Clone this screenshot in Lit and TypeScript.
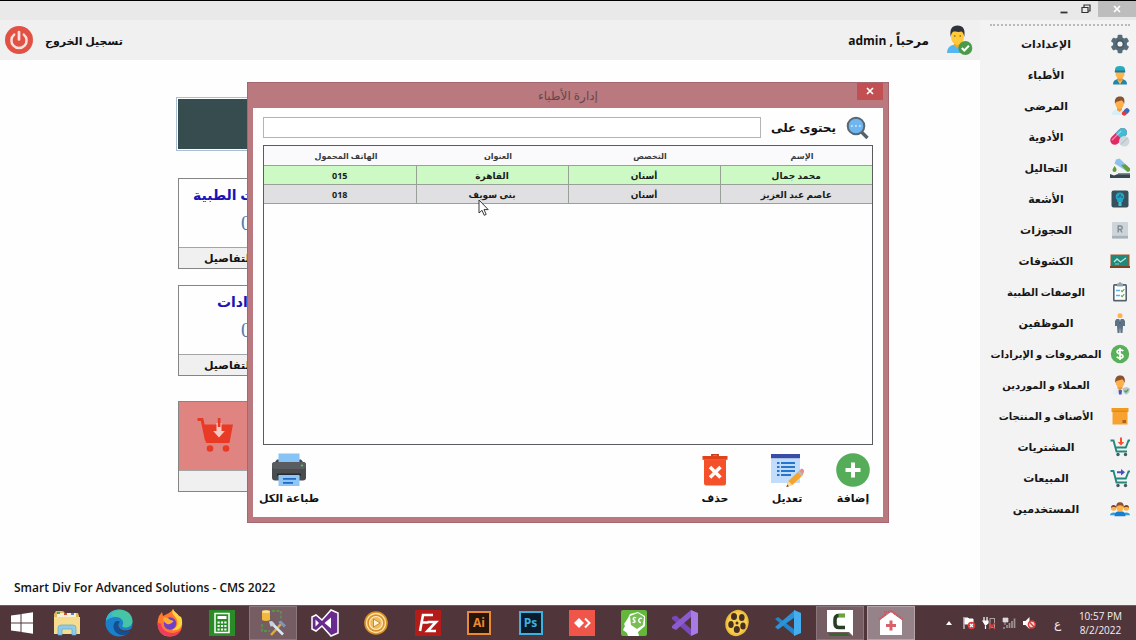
import { LitElement, html, css, TemplateResult } from "lit";
import { customElement, state } from "lit/decorators.js";
import { classMap } from "lit/directives/class-map.js";

type Icon = TemplateResult;

/* ---------- side menu icons ---------- */
const gear = html`<svg viewBox="0 0 20 20"><g fill="#566b78"><circle cx="10" cy="10" r="7"/><rect x="7.6" y="0.8" width="4.8" height="18.4" rx="1"/><rect x="7.6" y="0.8" width="4.8" height="18.4" rx="1" transform="rotate(60 10 10)"/><rect x="7.6" y="0.8" width="4.8" height="18.4" rx="1" transform="rotate(120 10 10)"/></g><circle cx="10" cy="10" r="4.4" fill="#455a64"/><circle cx="10" cy="10" r="2.6" fill="#f3f3f3"/></svg>`;
const surgeon = html`<svg viewBox="0 0 20 20"><path d="M3 19.5c0-4 2.5-5.5 7-5.5s7 1.500 7 5.500z" fill="#1e88a8"/><path d="M7.500 12h5v3L10 17.500 7.500 15z" fill="#e59a3c"/><path d="M10 19.500l-3-5 3 2 3-2z" fill="#ffb74d"/><ellipse cx="10" cy="8.800" rx="4.500" ry="5" fill="#ffb44c"/><path d="M5 6.500V4.500C5 2 7 1 10 1s5 1 5 3.500v2z" fill="#28a9c0"/><path d="M4.800 5.500h10.400v2H4.800z" fill="#177d97"/></svg>`;
const patient = html`<svg viewBox="0 0 20 20"><path d="M2 19c0-4 2.500-6 7-6 3 0 5 1 6 3v3z" fill="#d8eef6"/><path d="M7 11h5v3l-2.500 2L7 14z" fill="#ee9b3f"/><ellipse cx="9.600" cy="7.500" rx="4.300" ry="5.200" fill="#ffb04c"/><path d="M5 8C4.300 3 6 .500 10 .500S15 3 14.200 8c-.700-2-1.200-3-2.700-3.800C9 5.500 6 5 5 8z" fill="#8a5230"/><g transform="rotate(-45 15.500 16)"><rect x="11.300" y="13.800" width="8.400" height="4.600" rx="2.300" fill="#e53a35"/><path d="M15.500 13.800h2a2.300 2.300 0 0 1 0 4.600h-2z" fill="#2a6fc9"/></g></svg>`;
const pills = html`<svg viewBox="0 0 20 20"><g transform="rotate(-45 9 9)"><rect x="-1.500" y="4.500" width="20" height="9" rx="4.500" fill="#e02a63"/><path d="M8.500 4.500h5.500a4.500 4.500 0 0 1 0 9h-5.500z" fill="#42bcd4"/><path d="M1.500 7h12" stroke="#fff" stroke-opacity=".5" stroke-width="1.300" stroke-linecap="round"/></g><circle cx="14.300" cy="14.300" r="5.200" fill="#cfd8dc"/><path d="M11 17.500l6.500-6.500" stroke="#aab8c0"/></svg>`;
const lab = html`<svg viewBox="0 0 20 20"><path d="M6 1.500l3.500-1L20 10.500c1 2-1 4-3 3L4.500 5.500z" fill="#8fc0ee"/><path d="M11 7l4.500-.700 4.500 4.200c1 2-1 4-3 3z" fill="#62a03f"/><path d="M4.500 8c2 2.500 2.200 3 2 4a2 2 0 0 1-4 0c0-1 1-2 2-4z" fill="#5c9d37"/><path d="M0 16l4 1.500 4-1.500h12v4H0z" fill="#37474f"/><path d="M8 15h12v1.500H8z" fill="#78909c"/></svg>`;
const xray = html`<svg viewBox="0 0 20 20"><rect x="1.500" y="1.500" width="17" height="17" rx="2" fill="#37505d"/><path d="M10 3.500c3 0 4.300 1.700 4.300 4 0 2-.8 2.500-1.500 3.500v2H7.200v-2c-.700-1-1.500-1.500-1.500-3.500 0-2.300 1.300-4 4.300-4z" fill="#20a7c6"/><path d="M10 5v3M7.500 8h2M11 8h2M7 14h6" stroke="#164c66" stroke-width=".900"/><path d="M8.500 13h3v4h-3z" fill="#44c5dc"/></svg>`;
const keyR = html`<svg viewBox="0 0 20 20"><rect x="2" y="2" width="16" height="16.500" rx="1" fill="#cdd5da"/><path d="M2 15.800h16v2.700H2z" fill="#a8b2ba"/><path d="M8.200 12.500V6H10.500a1.700 1.700 0 0 1 0 3.500H8.200M10.300 9.500l1.700 3" fill="none" stroke="#7f8a92" stroke-width="1.400"/></svg>`;
const board = html`<svg viewBox="0 0 20 20"><rect x=".500" y="3.500" width="19" height="13" fill="#a2562c"/><rect x="1.800" y="4.800" width="16.400" height="9.900" fill="#21897a"/><path d="M4 11l3-3 3.500 3L16 7" fill="none" stroke="#bfe9df" stroke-width="1.300"/><path d="M5 13h4" stroke="#8ed0c3"/><path d="M0 15h20v2H0z" fill="#7b4426"/></svg>`;
const clipboard = html`<svg viewBox="0 0 20 20"><rect x="3" y="2" width="14" height="17.500" rx="1.500" fill="#56626b"/><rect x="4.600" y="3.800" width="10.800" height="14" fill="#fff"/><path d="M7 1.500h1.500a1.500 1.500 0 0 1 3 0H13v3H7z" fill="#90a4ae"/><path d="M6 8.500h4M6 13.500h4" stroke="#59aee9" stroke-width="1.300"/><path d="M11 8.500l1.200 1.200L14.300 7M11 13.500l1.200 1.200 2.100-2.700" stroke="#4caf50" stroke-width="1.100" fill="none"/></svg>`;
const employee = html`<svg viewBox="0 0 20 20"><circle cx="10" cy="2.700" r="2.500" fill="#ffb34d"/><path d="M6.500 6h7l1.500 2v5h-2l-.500 7h-2l-.500-6-.500 6h-2L7 13H5V8z" fill="#5d7486"/><path d="M9 5.500h2L10 10z" fill="#fff"/><path d="M10 6.500v4" stroke="#2c3e50" stroke-width=".800"/></svg>`;
const dollar = html`<svg viewBox="0 0 20 20"><circle cx="10" cy="10" r="9.200" fill="#59b05a"/><path d="M13.200 7.200C12.500 5.700 7.300 5.200 7.100 7.700c0 2.700 5.900 1.800 5.900 4.600 0 2.600-5.300 2.300-6.200.300M10 4v12" fill="none" stroke="#fff" stroke-width="1.700"/></svg>`;
const client = html`<svg viewBox="0 0 20 20"><path d="M3 19.500c0-4 2-6.500 7-6.500s6 2.500 6 6.500z" fill="#e9edf5"/><path d="M10 14l-1.500 1.500L9 19.500h2.500l.500-4z" fill="#4958b0"/><path d="M7.500 10.500h5v3L10 15.500l-2.500-2z" fill="#ee9b3f"/><ellipse cx="10" cy="7.500" rx="4.300" ry="5" fill="#ffb04c"/><path d="M5.300 8C4.600 3 6.500.500 10.200.500S15.500 3 14.700 8c-.700-2-1.200-3-2.700-3.800-2.500 1.300-5.700.800-6.700 3.800z" fill="#8a5230"/><path d="M16.300 12l3.500 1.200c.200 3-1 5.200-3.500 6.500-2.500-1.300-3.700-3.500-3.500-6.500z" fill="#b8c5cb"/><path d="M14.500 15.500l1.500 1.500 2.300-2.600" stroke="#43a047" stroke-width="1.200" fill="none"/></svg>`;
const box = html`<svg viewBox="0 0 20 20"><path d="M1.500 2h17v4h-17z" fill="#f09a22"/><path d="M2.500 5h15v13.500h-15z" fill="#f7a22e"/><path d="M2.500 5.300h15" stroke="#d98412"/><path d="M12.500 14h3.500v3h-3.500z" fill="#9f672c"/></svg>`;
const cartIn = html`<svg viewBox="0 0 20 20"><path d="M.500 3.500h3L6.500 14.500h10.500M5.300 10.500h10.500l2.700-7h1.500" fill="none" stroke="#23897b" stroke-width="1.900"/><circle cx="8" cy="17.500" r="1.700" fill="#455a64"/><circle cx="15.500" cy="17.500" r="1.700" fill="#455a64"/><path d="M10 .500h2v4.500h2.200L11 8.500 7.800 5H10z" fill="#f4512c"/></svg>`;
const cartOut = html`<svg viewBox="0 0 20 20"><path d="M.500 3h3l3 11.500h10.500M5.300 10.500h10.500l2.700-7h1.500" fill="none" stroke="#23897b" stroke-width="1.900"/><circle cx="8" cy="17.500" r="1.700" fill="#455a64"/><circle cx="15.500" cy="17.500" r="1.700" fill="#455a64"/><path d="M7 3.300h4V1l4 3.300-4 3.300V5.300H7z" fill="#4a4fc0"/></svg>`;
const users = html`<svg viewBox="0 0 22 20"><path d="M0 17c0-4 7-4 8-1h6c1-3 8-3 8 1z" fill="#2f9fe0"/><circle cx="4" cy="9" r="3" fill="#ffb04c"/><path d="M1 9c0-4.500 6-4.500 6 0-1-1.500-5-1.500-6 0z" fill="#7a4526"/><circle cx="18" cy="9" r="3" fill="#ffb04c"/><path d="M15 9c0-4.500 6-4.500 6 0-1-1.500-5-1.500-6 0z" fill="#7a4526"/><path d="M5 18c0-4.500 2.500-5.500 6-5.500s6 1 6 5.500z" fill="#1480cf"/><ellipse cx="11" cy="8.500" rx="3.700" ry="4.500" fill="#ffb44c"/><path d="M7 8.500C6.500 4 8 2.500 11 2.500s4.500 1.500 4 6c-1.500-3.500-6.500-3.500-8 0z" fill="#8a5230"/></svg>`;

/* ---------- header and dialog icons ---------- */
const power = html`<svg class="i28" viewBox="0 0 28 28"><circle cx="14" cy="14" r="14" fill="#e25244"/><path d="M9.200 8.600a7.600 7.600 0 1 0 9.600 0" fill="none" stroke="#fbe0dc" stroke-width="2.500" stroke-linecap="round"/><path d="M14 6v7.500" stroke="#fbe0dc" stroke-width="2.700" stroke-linecap="round"/></svg>`;
const admin = html`<svg class="i30" viewBox="0 0 30 30"><path d="M2 28c0-6 4-8.500 10-8.500S22 22 22 28z" fill="#55b6ee"/><path d="M9 17h6.500v3.500L12.200 23 9 20.500z" fill="#f0a82a"/><ellipse cx="12.500" cy="11.500" rx="6.500" ry="8.500" fill="#ffc93a"/><path d="M5.700 12C4.500 4 7 .500 12.500 .500S20.500 4 19.300 12c-.500-3-1.300-4.500-2.800-5.500-3 1-6.500 0-8 0-1.500 1-2.300 2.500-2.800 5.500z" fill="#30343a"/><path d="M9 11h1.500M14.500 11H16" stroke="#5a3b1d"/><circle cx="20.300" cy="23" r="7" fill="#4a9a4a"/><path d="M16.800 23l2.500 2.500 4.600-4.800" fill="none" stroke="#fff" stroke-width="2"/></svg>`;
const search = html`<svg class="i24" viewBox="0 0 24 24"><path d="M15.500 16l6 6" stroke="#54626b" stroke-width="3.300"/><circle cx="10" cy="10" r="8.300" fill="#6fb5f2" stroke="#59686f" stroke-width="2"/><path d="M5 10h1.800M9 10h1.800M13 10h1.800" stroke="#d9ecfb" stroke-width="1.500"/></svg>`;
const add = html`<svg class="i34" viewBox="0 0 34 34"><circle cx="17" cy="17" r="16.800" fill="#55ac59"/><path d="M17 9.500v15M9.500 17h15" stroke="#fff" stroke-width="4"/></svg>`;
const edit = html`<svg class="i34" viewBox="0 0 34 34"><path d="M1 1h29v29H1z" fill="#c2dcfb"/><path d="M1 1h29v4.200H1z" fill="#3a4da4"/><path d="M7 10h2.500M7 14h2.500M7 18h2.500M7 22h2.500M11 10h14M11 14h14M11 18h14M11 22h10" stroke="#2775cf" stroke-width="1.900"/><path d="M16.500 34l1.800-6L29.500 17.500l4 4L22.300 32z" fill="#f4a62c"/><path d="M29 17.800l2-1.800c1.500-1 4 1.500 3 3l-1.500 3z" fill="#e88d91"/><path d="M27.800 19l3.900 4 1.300-1.200-3.900-4z" fill="#b8c0c6"/><path d="M16.500 34l1.800-6 4 4z" fill="#ffd7a0"/><path d="M16.500 34l.700-2.400 1.600 1.600z" fill="#37474f"/></svg>`;
const trash = html`<svg class="i34" viewBox="0 0 34 34"><path d="M14 3.500V1.800h6v1.700" fill="none" stroke="#c63d1a" stroke-width="1.800"/><path d="M4.500 3h25v3.800h-25z" fill="#e0431c"/><path d="M6 6.500h22V30a2.500 2.500 0 0 1-2.500 2.500h-17A2.500 2.500 0 0 1 6 30z" fill="#f4512a"/><path d="M12 14l10.500 10.500M22.500 14L12 24.500" stroke="#fff" stroke-width="3.500"/></svg>`;
const printer = html`<svg class="i34" viewBox="0 0 34 34"><path d="M3 9l2-2.500h24L31 9z" fill="#37444b"/><path d="M6.500.500h21V10h-21z" fill="#88c3f6"/><rect x="0" y="9" width="34" height="18.500" rx="3" fill="#4a4d50"/><rect x="0" y="9" width="34" height="7" rx="3" fill="#5a5d60"/><circle cx="30" cy="12.500" r="1" fill="#55d66b"/><path d="M5 20.500h24V23H5z" fill="#292c2f"/><path d="M6.500 22h21v11h-21z" fill="#8fc6f8"/><path d="M11 25.800h13M11 29.800h10" stroke="#2468c0" stroke-width="1.700"/></svg>`;
const bigCart = html`<svg class="i36" viewBox="0 0 36 36"><path d="M.500 2.500h4.500l4.500 21" fill="none" stroke="#e93a25" stroke-width="3"/><path d="M5.500 7.500H36L32.500 26H9z" fill="#e93a25"/><path d="M19.500 6h5v8h3.300L22 20.500 16.200 14h3.300z" fill="#f3c9c4"/><path d="M20.800 1h2.700v9h-2.700z" fill="#e93a25"/><circle cx="13" cy="31.500" r="3.300" fill="#e93a25"/><circle cx="29" cy="31.500" r="3.300" fill="#e93a25"/></svg>`;
const arrow = html`<svg class="cursor" viewBox="0 0 12 18" aria-hidden="true"><path d="M1 1v13l3-2.700 2.200 5 2-.900L6 10.600h4.200z" fill="#fff" stroke="#222" stroke-width=".900"/></svg>`;

/* ---------- taskbar icons ---------- */
const windows = html`<svg class="i26" viewBox="0 0 26 26"><path d="M2 5.500l9.500-1.300v8.300H2zM12.500 4L24 2.300v10.200H12.500zM2 13.500h9.500v8.300L2 20.500zM12.500 13.500H24v10.200L12.500 22z" fill="#fff"/></svg>`;
const explorer = html`<svg class="i28" viewBox="0 0 28 28"><path d="M1 5l2-3h7l2 2h13l1 3v16H1z" fill="#dcb95e"/><path d="M4 4h19v6H4z" fill="#f7f0d4"/><path d="M4 3h3v2H4z" fill="#42a55a"/><path d="M11 4h3v2h-3z" fill="#d84a35"/><path d="M18 4h3v2h-3z" fill="#3b8fd6"/><path d="M1 8h26v17H1z" fill="#f6dc8e"/><path d="M5 26v-7q0-3 3-3h12q3 0 3 3v7h-4v-6H9v6z" fill="#8fcbe8" stroke="#5aa9d1" stroke-width=".700"/></svg>`;
const edge = html`<svg class="i28" viewBox="0 0 28 28"><circle cx="14" cy="14" r="13.500" fill="#1b7fc9"/><path d="M1 12C2 4 8 .500 14 .500c8 0 13.500 5 13.500 11.500 0 4-3 6.500-7 6.500-3 0-4-1.500-2.500-3C19 12 16 8 11 8 6 8 2 10 1 12z" fill="#45c5a5"/><path d="M1 12c1-7 6-10.500 12-11C6 3 4 7 11 8 6 8 2 10 1 12z" fill="#36b4d8"/><path d="M10 13c-4 5 0 13 8 13 3 0 6-1.500 7.500-4-6 2-11 1-12.500-4-.500-2 .500-4 2-5-2-1.500-4-1-5 0z" fill="#124f93"/><path d="M14.500 13c-2 2-1.500 5 1 7 3 2 7 2 10.500 0l-.500 2c-6 2-11 1-12.500-4-.500-2 .500-4 1.500-5z" fill="#4f3138"/></svg>`;
const firefox = html`<svg class="i28" viewBox="0 0 28 28"><path d="M3 7l3-4 1 4 4-2C13 4 15 3 17 0c1 3 4 4 6 7l2 1c3 8 1 19-11 19.500C4 27.500-1 18 3 7z" fill="#ff7a2c"/><path d="M17 0c-2 5 1 6 3 9 3 5 1 10-4 12 9 2 12-7 9-13l-2-1c-2-3-5-4-6-7z" fill="#ffd43e"/><path d="M1.500 14C2 24 8 27.500 14 27.500c5 0 9-2.500 11-7-6 6-19 4-20-6z" fill="#ef3c60"/><circle cx="14" cy="14.500" r="6.200" fill="#7040c8"/><path d="M7 9c3-1 6 0 7 2 2 0 4 1 3 2-2 1-3 3-6 2-2-1-4-3-4-6z" fill="#ffaa32"/></svg>`;
const calc = html`<svg class="i26" viewBox="0 0 26 26"><rect width="26" height="26" fill="#298c26"/><rect x="6" y="3.500" width="14" height="19" fill="none" stroke="#fff" stroke-width="1.500"/><path d="M8.500 7.500h9" stroke="#fff" stroke-width="3"/><path d="M8.500 12.500h9M8.500 16h9M8.500 19.500h9" stroke="#fff" stroke-width="2" stroke-dasharray="2.200 1.200"/></svg>`;
const tools = html`<svg class="i28" viewBox="0 0 28 28"><path d="M13 2h9v8M3 15v7h8" fill="none" stroke="#4fa63d" stroke-width="1.300" stroke-dasharray="3 1.500"/><path d="M3 2.500q4-2 8 0V11q-4 2-8 0z" fill="#f0b93b"/><ellipse cx="7" cy="2.700" rx="4" ry="1.400" fill="#ffe08a"/><path d="M12 26L22 15" stroke="#d8ab47" stroke-width="2.600"/><path d="M19 13l3-1.500 5 5-2 2z" fill="#7e97b8"/><path d="M13 14.500l11 11" stroke="#dce6ef" stroke-width="2.600"/><path d="M10 12.500l3-.500 2.500 2.500-.500 2.500-3.500.500z" fill="#c5d3df"/></svg>`;
const vsOld = html`<svg class="i28" viewBox="0 0 28 28"><path d="M1 8l4-2 6 5L20 1l7 3v20l-7 3-9-10-6 5-4-2z" fill="#692a8e" stroke="#fff" stroke-width="1.500"/><path d="M4.500 10.500v7l3.500-3.500zM20 8.500v11L13.500 14z" fill="#fff"/></svg>`;
const player = html`<svg class="i26" viewBox="0 0 26 26"><circle cx="13" cy="13" r="11.800" fill="#d98f28"/><circle cx="13" cy="13" r="9.500" fill="none" stroke="#ffe3a1" stroke-width="1.400"/><circle cx="13" cy="13" r="6.500" fill="#f0b95a" stroke="#fff0c8" stroke-width="1.200"/><path d="M10.500 9l6.500 4-6.500 4z" fill="#fff7df" stroke="#b46b16" stroke-width=".700"/></svg>`;
const filezilla = html`<svg class="i26" viewBox="0 0 26 26"><rect width="26" height="26" fill="#b51b18"/><path d="M5 21L8 5h10M6.500 12.500h7M12.500 12h8.500l-8.500 9H21" fill="none" stroke="#fff" stroke-width="2.600"/></svg>`;
const anydesk = html`<svg class="i26" viewBox="0 0 26 26"><rect width="26" height="26" fill="#ef5548"/><path d="M5 13l5-5 5 5-5 5z" fill="#fff"/><path d="M14 8.500l4.500 4.500-4.500 4.500" transform="translate(2)" fill="none" stroke="#fff" stroke-width="2"/></svg>`;
const sc = html`<svg class="i26" viewBox="0 0 26 26"><rect width="26" height="26" rx="2" fill="#63b73a"/><path d="M2 20l2-4-1-2 4-6 2-4 8-2 7 4v10l-7 6 1 4H7l-1-3z" fill="#fff"/><path d="M9 6l8-3 6 4-1 8-6 4-6-4z" fill="#78bd55"/><path d="M15 8c-2-1.500-4 1-2 2s1 3.500-1.500 2M21 8.500c-3-2-5 4-1 4" fill="none" stroke="#fff" stroke-width="1.400"/></svg>`;
const vsNew = html`<svg class="i28" viewBox="0 0 28 28"><path d="M1 8l4-1.500L20 20v7L1 10z" fill="#7a48bd"/><path d="M1 19l4 2L20 8V1L1 17z" fill="#8d5bd0"/><path d="M20 1l7 3v20l-7 3z" fill="#a77ae6"/></svg>`;
const reel = html`<svg class="i28" viewBox="0 0 28 28"><ellipse cx="14" cy="14" rx="11.500" ry="13.300" transform="rotate(20 14 14)" fill="#eebb39"/><ellipse cx="14" cy="14" rx="9.800" ry="11.500" transform="rotate(20 14 14)" fill="#f5ce4d"/><g fill="#482d22"><ellipse cx="11" cy="7.500" rx="3" ry="3.600"/><ellipse cx="18.800" cy="8.500" rx="2.800" ry="3.500"/><ellipse cx="8" cy="15.500" rx="2.700" ry="3.500"/><ellipse cx="20" cy="17" rx="2.700" ry="3.500"/><ellipse cx="13.800" cy="20.500" rx="3" ry="3.500"/><circle cx="14" cy="14" r="1.500"/></g></svg>`;
const vscode = html`<svg class="i28" viewBox="0 0 28 28"><path d="M1 10l3-2 17 13v6z" fill="#2186cb"/><path d="M1 18l3 2.500L21 8V1z" fill="#2b93d8"/><path d="M20 1l7 3v20l-7 3z" fill="#46aeee"/></svg>`;
const camtasia = html`<svg class="i28" viewBox="0 0 28 28"><path d="M1 1h26v26l-4-4H1z" fill="#fff"/><path d="M2 24h19l4 3H4z" fill="#36672a"/><path d="M19 6.500h-6q-4 0-4 4v4q0 4 4 4h6" fill="none" stroke="#263e22" stroke-width="3.500"/><path d="M12.500 6.500H19" stroke="#69a43d" stroke-width="3.500"/></svg>`;
const clinic = html`<svg class="i28" viewBox="0 0 28 28"><path d="M3 11L14 3l11 8v15H3z" fill="#fff"/><path d="M2 10.500L8 6V3h4l2-1 12 8.500" fill="none" stroke="#d9545c" stroke-width="2" stroke-dasharray="2.500 .800"/><path d="M14 11.500v10M9 16.500h10" stroke="#d8616a" stroke-width="3"/></svg>`;
const flag = html`<svg class="i14" viewBox="0 0 14 14"><path d="M2 1v12M3 2h3l1 1h4v6H7L6 8H3z" fill="#fff" stroke="#fff"/><circle cx="9.500" cy="9.500" r="3.800" fill="#dc3d3d"/><path d="M8 8l3 3M11 8l-3 3" stroke="#fff" stroke-width="1.200"/></svg>`;
const plug = html`<svg class="i14" viewBox="0 0 14 14"><path d="M2 1v4M5 1v4M1 5h5v2L3.500 9zM3.500 8v5" fill="#fff" stroke="#fff" stroke-width="1.200"/><rect x="8" y="2.500" width="4.500" height="9" fill="none" stroke="#ada3a5"/><path d="M7 7l6 6M13 7l-6 6" stroke="#e13a3a" stroke-width="1.400"/></svg>`;
const signal = html`<svg class="i14" viewBox="0 0 14 14"><path d="M1 12h2M5 12V9M7.500 12V7M10 12V5M12.500 12V2.500" stroke="#9d9496" stroke-width="1.700"/><path d="M1 2h5v4H1zM3 6v3" fill="#ddd8d9" stroke="#ddd8d9" stroke-width=".700"/></svg>`;
const sound = html`<svg class="i14" viewBox="0 0 14 14"><path d="M1 5h2.500L7.500 1v12L3.500 9H1z" fill="#fff"/><circle cx="9.800" cy="8.500" r="3.400" fill="#f2d7d7" stroke="#df3a3a" stroke-width="1.500"/><path d="M7.500 6.200l4.700 4.700" stroke="#df3a3a" stroke-width="1.400"/></svg>`;

const MENU: [string, Icon][] = [
  ["الإعدادات", gear],
  ["الأطباء", surgeon],
  ["المرضى", patient],
  ["الأدوية", pills],
  ["التحاليل", lab],
  ["الأشعة", xray],
  ["الحجوزات", keyR],
  ["الكشوفات", board],
  ["الوصفات الطبية", clipboard],
  ["الموظفين", employee],
  ["المصروفات و الإيرادات", dollar],
  ["العملاء و الموردين", client],
  ["الأصناف و المنتجات", box],
  ["المشتريات", cartIn],
  ["المبيعات", cartOut],
  ["المستخدمين", users],
];

const TASKS: { name: string; icon: Icon; open?: boolean }[] = [
  { name: "File Explorer", icon: explorer },
  { name: "Edge", icon: edge },
  { name: "Firefox", icon: firefox },
  { name: "Calculator", icon: calc },
  { name: "SQL tools", icon: tools, open: true },
  { name: "Visual Studio", icon: vsOld },
  { name: "Player", icon: player },
  { name: "FileZilla", icon: filezilla },
  { name: "Illustrator", icon: html`<span class="adobe ai">Ai</span>` },
  { name: "Photoshop", icon: html`<span class="adobe ps">Ps</span>` },
  { name: "AnyDesk", icon: anydesk },
  { name: "SC", icon: sc },
  { name: "Visual Studio 2022", icon: vsNew },
  { name: "Video", icon: reel },
  { name: "VS Code", icon: vscode },
  { name: "Camtasia", icon: camtasia, open: true },
  { name: "CMS", icon: clinic, open: true },
];

const base = css`
  * { box-sizing: border-box; }
  button, input { font: inherit; color: inherit; }
  button { border: 0; padding: 0; margin: 0; background: none; cursor: default; }
  svg { display: block; flex: none; }
  .i14 { width: 14px; height: 14px; }
  .i24 { width: 24px; height: 24px; }
  .i26 { width: 26px; height: 26px; }
  .i28 { width: 28px; height: 28px; }
  .i30 { width: 30px; height: 30px; }
  .i34 { width: 34px; height: 34px; }
  .i36 { width: 36px; height: 36px; }
`;

@customElement("side-menu")
class SideMenu extends LitElement {
  static styles = [base, css`
    :host { display: block; background: #f3f3f3; padding: 4px 6px 0 10px; }
    .menu { list-style: none; margin: 0; padding: 0; border-top: 2px dotted #b9b9b9; padding-top: 2px; }
    .entry { display: flex; align-items: center; gap: 8px; width: 100%; height: 31px; font-weight: bold; font-size: 11px; color: #161616; }
    .entry svg { width: 20px; height: 20px; }
    .label { flex: 1; text-align: center; white-space: nowrap; }
    .long { font-size: 10px; }
  `];
  render() {
    return html`<ul class="menu">${MENU.map(([label, icon]) => html`
      <li><button class="entry">${icon}<span class=${classMap({ label: true, long: label.length > 12 })}>${label}</span></button></li>`)}</ul>`;
  }
}

@customElement("doctors-dialog")
class DoctorsDialog extends LitElement {
  @state() private selected = 0;
  private rows = [
    ["محمد جمال", "أسنان", "القاهرة", "015"],
    ["عاصم عبد العزيز", "أسنان", "بنى سويف", "018"],
  ];
  static styles = [base, css`
    :host { display: flex; flex-direction: column; background: #b9797e; border: 1px solid #a5666f; padding: 0 5px 5px; }
    .title { display: grid; grid-template-columns: 26px 1fr 26px; height: 25px; color: #66464a; font-size: 12px; }
    .title h1 { margin: 0; font: inherit; text-align: center; line-height: 26px; }
    .close { height: 17px; background: #c24f52; color: #fff; display: grid; place-items: center; }
    .close svg { width: 8px; height: 8px; }
    .body { flex: 1; display: flex; flex-direction: column; background: #fefefe; padding: 8px 10px 10px; }
    .search { display: flex; align-items: center; height: 24px; font-weight: bold; font-size: 12px; padding-right: 3px; }
    .search label { margin: 0 10px; white-space: nowrap; }
    .search input { flex: 1; min-width: 0; height: 21px; border: 1px solid #b4b4b4; background: #fff; padding: 0 4px; outline: 0; }
    .table { position: relative; flex: 1; margin-top: 5px; border: 1px solid #5c5c60; background: #fefefe; }
    table { width: 100%; table-layout: fixed; border-collapse: collapse; text-align: center; color: #1b1b1b; }
    th { height: 20px; padding: 0 0 0 12px; font-size: 8px; font-weight: bold; color: #3b3b3f; background: #fafafc; }
    td { height: 19px; padding: 0; font-size: 9px; font-weight: bold; border: 1px solid #98a098; background: #e0dfe1; white-space: nowrap; }
    td:first-child { border-right: 0; }
    td:last-child { border-left: 0; }
    .picked td { background: #cdf9c4; }
    .cursor { position: absolute; left: 214px; top: 53px; width: 12px; height: 18px; }
    .actions { display: flex; margin-left: -4px; padding-top: 8px; font-weight: bold; font-size: 11px; }
    .action { display: flex; flex-direction: column; align-items: center; gap: 2px; min-width: 40px; white-space: nowrap; line-height: 18px; }
    .edit { margin-right: 26px; }
    .delete { margin-right: 32px; }
    .print { margin-right: auto; }
  `];
  render() {
    return html`
      <div class="title">
        <button class="close" aria-label="إغلاق"><svg viewBox="0 0 8 8"><path d="M1 1l6 6M7 1L1 7" stroke="#fff" stroke-width="1.700"/></svg></button>
        <h1>إدارة الأطباء</h1>
      </div>
      <div class="body">
        <div class="search">${search}<label for="q">يحتوى على</label><input id="q" type="text"></div>
        <div class="table">
          <table>
            <thead><tr><th>الإسم</th><th>التخصص</th><th>العنوان</th><th>الهاتف المحمول</th></tr></thead>
            <tbody>${this.rows.map((r, i) => html`
              <tr class=${classMap({ picked: i === this.selected })} @click=${() => (this.selected = i)}>
                ${r.map((c) => html`<td>${c}</td>`)}
              </tr>`)}</tbody>
          </table>
          ${arrow}
        </div>
        <div class="actions">
          <button class="action">${add}<span>إضافة</span></button>
          <button class="action edit">${edit}<span>تعديل</span></button>
          <button class="action delete">${trash}<span>حذف</span></button>
          <button class="action print">${printer}<span>طباعة الكل</span></button>
        </div>
      </div>`;
  }
}

@customElement("task-bar")
class TaskBar extends LitElement {
  static styles = [base, css`
    :host { display: flex; height: 35px; background: #50353b; border-top: 1px solid #73595e; color: #f4eff0; }
    .start { width: 43px; display: grid; place-items: center; }
    .tasks { flex: 1; display: flex; justify-content: space-between; }
    .task { width: 48px; display: grid; place-items: center; }
    .open { background: #755d63; border: 1px solid #8b767b; }
    .task:last-child.open { background: #96838a; border-color: #b5a5aa; }
    .adobe { width: 24px; height: 24px; border: 2px solid; font-weight: bold; font-size: 12px; line-height: 20px; text-align: center; }
    .ai { color: #e98a35; background: #27150b; }
    .ps { color: #3fb0e0; background: #0b1c2a; }
    .tray { width: 221px; display: flex; align-items: center; padding: 0 14px 0 31px; font-size: 10px; }
    .icons { display: flex; align-items: center; gap: 6px; flex: 1; }
    .up { width: 6px; height: 4px; margin-right: 4px; }
    .lang { margin-left: 12px; font-size: 12px; }
    .clock { text-align: center; line-height: 14px; white-space: nowrap; }
  `];
  render() {
    return html`
      <button class="start" aria-label="Start">${windows}</button>
      <div class="tasks">${TASKS.map((t) => html`
        <button class=${classMap({ task: true, open: !!t.open })} aria-label=${t.name}>${t.icon}</button>`)}</div>
      <div class="tray">
        <div class="icons">
          <svg class="up" viewBox="0 0 6 4"><path d="M0 4l3-4 3 4z" fill="#fff"/></svg>
          ${flag}${plug}${signal}${sound}<span class="lang">ع</span>
        </div>
        <div class="clock"><div>10:57 PM</div><div>8/2/2022</div></div>
      </div>`;
  }
}

@customElement("app-root")
class AppRoot extends LitElement {
  static styles = [base, css`
    :host { display: flex; flex-direction: column; height: 100vh; overflow: hidden; background: #fefefe; color: #111; font-family: "Open Sans", "DejaVu Sans", sans-serif; font-size: 12px; }
    .window { position: relative; flex: 1; min-height: 0; display: flex; flex-direction: column; border-top: 1px solid #000; }
    .titlebar { display: flex; justify-content: flex-end; height: 19px; background: #e9e9e9; }
    .ctl { width: 22px; height: 16px; display: grid; place-items: center; }
    .ctl svg { width: 10px; height: 10px; }
    .quit { width: 38px; background: #bdbdbd; margin-left: 1px; }
    .page { flex: 1; min-height: 0; display: flex; direction: rtl; }
    side-menu { width: 156px; }
    main { flex: 1; min-width: 0; display: flex; flex-direction: column; direction: ltr; }
    .top { display: flex; justify-content: space-between; align-items: center; height: 40px; padding: 0 5px; background: #f0f0f0; font-weight: bold; }
    .logout, .user { display: flex; align-items: center; gap: 12px; font-size: 11px; }
    .user { gap: 16px; font-size: 12px; }
    .board { flex: 1; padding: 37px 0 0 178px; }
    .hero { width: 144px; height: 54px; margin-left: -2px; background: #364c4e; border: 1px solid #a9bfd2; outline: 1px solid #fff; outline-offset: -2px; }
    .card { display: flex; flex-direction: column; width: 142px; height: 91px; margin-top: 16px; border: 1px solid #858585; background: #fefefe; direction: rtl; text-align: left; overflow: hidden; }
    .first { margin-top: 27px; }
    .card h2 { margin: 0; padding: 4px 0 0 14px; font-size: 14px; line-height: 24px; color: #1b14b4; white-space: nowrap; }
    .revenue h2 { padding-left: 38px; }
    .count { flex: 1; padding-left: 62px; font: 20px/32px "Liberation Serif", serif; color: #4b7db0; }
    .more { height: 21px; padding-left: 25px; background: #f0f0f0; border-top: 1px solid #a5a5a5; text-align: left; font-weight: bold; font-size: 11px; line-height: 18px; }
    .buy { margin-top: 25px; background: #e08482; }
    .art { flex: 1; padding: 15px 0 0 18px; direction: ltr; }
    footer { padding: 0 14px 8px; font-weight: 600; line-height: 18px; }
    .layer { position: absolute; inset: 0; display: grid; place-items: center; padding-bottom: 2px; pointer-events: none; }
    doctors-dialog { width: 642px; height: 441px; direction: rtl; pointer-events: auto; }
  `];
  render() {
    return html`
      <div class="window">
        <div class="titlebar">
          <button class="ctl" aria-label="Minimize"><svg viewBox="0 0 10 10"><path d="M1.500 8.500h7" stroke="#333" stroke-width="1.800"/></svg></button>
          <button class="ctl" aria-label="Restore"><svg viewBox="0 0 10 10"><path d="M3 3V1h6v6H7M1 3.500h6v5H1z" fill="none" stroke="#333" stroke-width="1.200"/></svg></button>
          <button class="ctl quit" aria-label="Close"><svg viewBox="0 0 10 10"><path d="M2 2l6 6M8 2L2 8" stroke="#fff" stroke-width="1.600"/></svg></button>
        </div>
        <div class="page">
          <side-menu></side-menu>
          <main>
            <header class="top">
              <button class="logout">${power}<span>تسجيل الخروج</span></button>
              <div class="user"><span dir="rtl">مرحباً , admin</span>${admin}</div>
            </header>
            <div class="board">
              <div class="hero"></div>
              <section class="card first"><h2>الخدمات الطبية</h2><div class="count">0</div><button class="more">التفاصيل</button></section>
              <section class="card revenue"><h2>الإيرادات</h2><div class="count">0</div><button class="more">التفاصيل</button></section>
              <section class="card buy"><div class="art">${bigCart}</div><button class="more" aria-label="المشتريات"></button></section>
            </div>
            <footer>Smart Div For Advanced Solutions - CMS 2022</footer>
          </main>
        </div>
        <div class="layer"><doctors-dialog></doctors-dialog></div>
      </div>
      <task-bar></task-bar>`;
  }
}
